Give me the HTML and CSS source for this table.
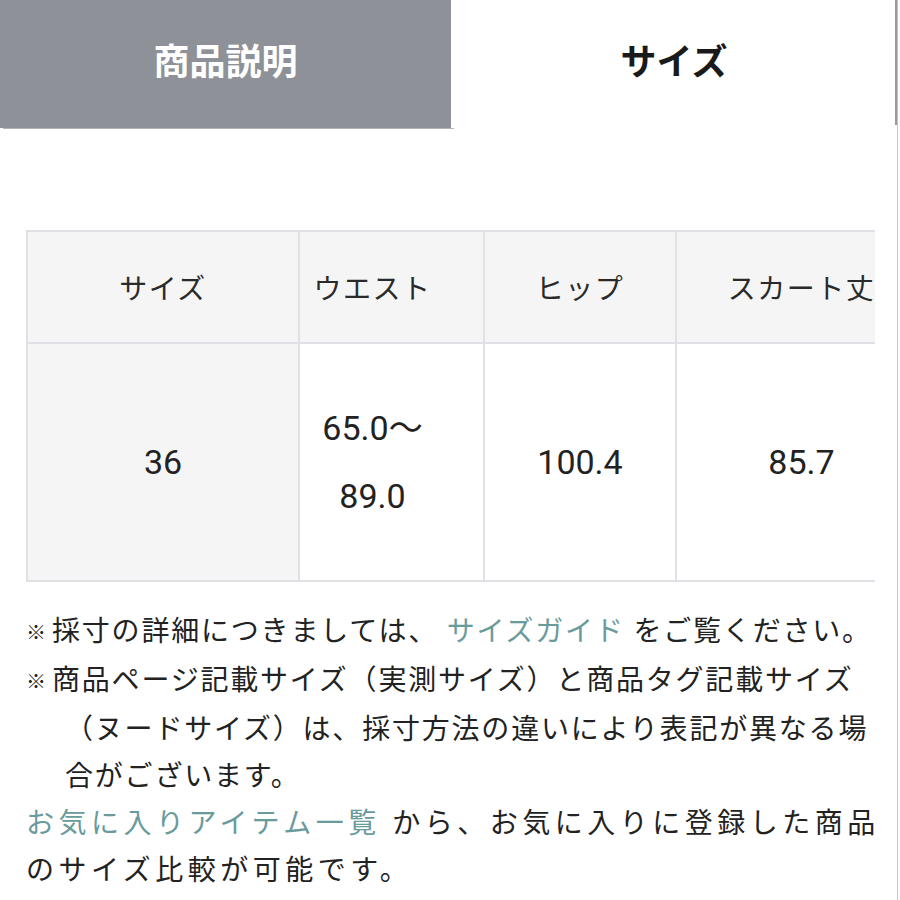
FILE: index.html
```html
<!DOCTYPE html>
<html lang="ja">
<head>
<meta charset="utf-8">
<title>サイズ</title>
<link rel="stylesheet" href="styles.css">
</head>
<body>
<div class="page">
  <div class="scroll-thumb"></div>
  <nav class="tabs">
    <div class="tab tab-inactive">商品説明</div>
    <div class="tab tab-active">サイズ</div>
  </nav>
  <section class="content">
    <div class="table-wrap">
      <table class="size-table">
        <colgroup>
          <col class="c1"><col class="c2"><col class="c3"><col class="c4">
        </colgroup>
        <thead>
          <tr>
            <th>サイズ</th>
            <th class="waist">ウエスト</th>
            <th>ヒップ</th>
            <th>スカート丈</th>
          </tr>
        </thead>
        <tbody>
          <tr>
            <th class="row-head">36</th>
            <td class="waist multi">65.0〜<br>89.0</td>
            <td>100.4</td>
            <td>85.7</td>
          </tr>
        </tbody>
      </table>
    </div>
    <ul class="notes">
      <li><span class="mark">※</span>採寸の詳細につきましては、 <a class="link" href="#">サイズガイド</a> をご覧ください。</li>
      <li><span class="mark">※</span>商品ページ記載サイズ（実測サイズ）と商品タグ記載サイズ（ヌードサイズ）は、採寸方法の違いにより表記が異なる場合がございます。</li>
    </ul>
    <p class="fav"><a class="link" href="#">お気に入りアイテム一覧</a> から、お気に入りに登録した商品のサイズ比較が可能です。</p>
    <p class="fav">利用には会員登録・ログインが必要です。</p>
  </section>
</div>
</body>
</html>
```

FILE: styles.css
```css
* { box-sizing: border-box; }
html, body { margin: 0; padding: 0; background: #fff; }
body {
  font-family: Roboto, "Noto Sans CJK JP", sans-serif;
  color: #222;
}
.page {
  position: relative;
  width: 898px;
  height: 900px;
  overflow: hidden;
  border-right: 1px solid #c6c6c8;
}
.scroll-thumb {
  position: absolute;
  top: 0;
  right: -1px;
  width: 3px;
  height: 125px;
  background: #9a9a9c;
}
.tabs {
  display: flex;
  height: 128px;
}
.tab {
  display: flex;
  align-items: center;
  justify-content: center;
  font-family: "Noto Sans CJK JP", sans-serif;
  font-weight: 700;
  font-size: 36px;
  padding-bottom: 10px;
}
.tab-inactive {
  width: 451px;
  background: #8e9197;
  color: #fff;
  box-shadow: 1px 0 0 #fff, 3px 1px 0 #b3b4b8;
}
.tab-active {
  flex: 1;
  background: #fff;
  color: #1a1a1a;
}
.content {
  padding: 102px 0 0 26px;
}
.table-wrap {
  width: 849px;
  overflow: hidden;
}
.size-table {
  border-collapse: collapse;
  table-layout: fixed;
  width: 900px;
}
.c1 { width: 272px; }
.c2 { width: 185px; }
.c3 { width: 192px; }
.c4 { width: 251px; }
.size-table th,
.size-table td {
  border: 2px solid #e0e1e6;
  text-align: center;
  vertical-align: middle;
  padding: 0;
  font-weight: 400;
}
.size-table thead th {
  height: 112px;
  background: #f5f5f6;
  font-size: 28px;
  letter-spacing: 1.5px;
  color: #2a2a2a;
}
.size-table tbody th,
.size-table tbody td {
  height: 238px;
  font-size: 34px;
  color: #222;
}
.size-table .row-head { background: #f5f5f6; }
.size-table .waist { padding-right: 38px; }
.size-table .multi { line-height: 68px; }
.notes {
  list-style: none;
  margin: 26px 0 0;
  padding: 0;
  width: 860px;
}
.notes li {
  font-size: 28px;
  line-height: 47px;
  letter-spacing: 1.8px;
  padding-left: 39px;
  text-indent: -39px;
}
.mark {
  display: inline-block;
  width: 26px;
  text-indent: 0;
  font-size: 20px;
  letter-spacing: 0;
  vertical-align: 1px;
}
.fav {
  margin: 0;
  width: 862px;
  font-size: 28px;
  line-height: 47px;
  letter-spacing: 4.5px;
}
.link {
  color: #6a9b9c;
  text-decoration: none;
}
```
